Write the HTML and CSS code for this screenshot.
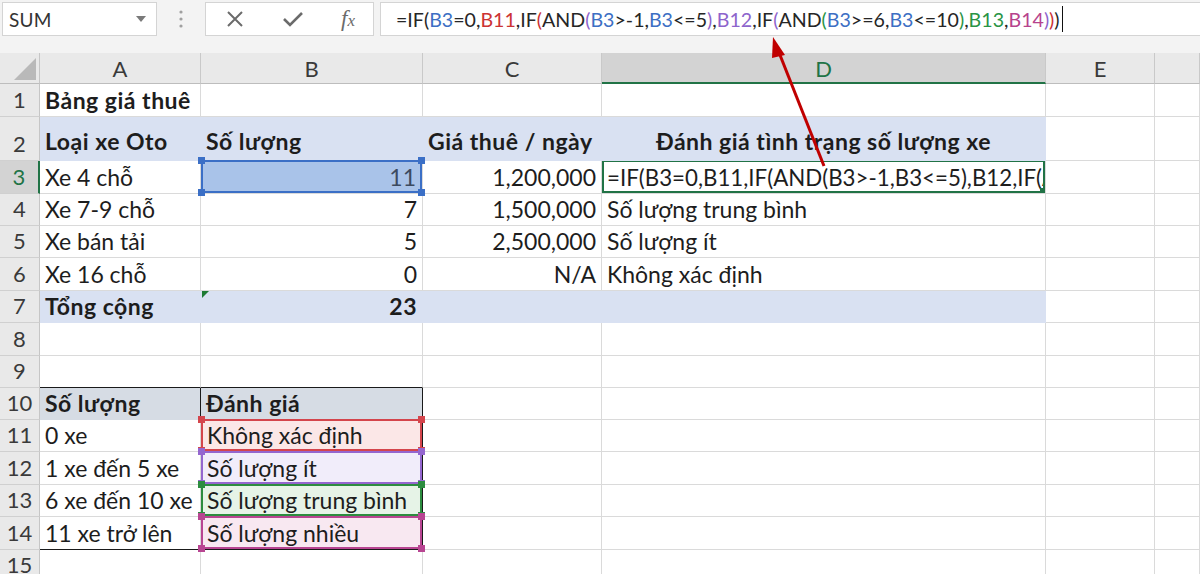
FILE: index.html
```html
<!DOCTYPE html>
<html lang="vi">
<head>
<meta charset="utf-8">
<title>Excel IF</title>
<link rel="stylesheet" href="styles.css">
</head>
<body>
<div class="page">
  <div class="toolbar">
    <div class="namebox">
      <span class="nb-text">SUM</span>
      <svg class="nb-caret" width="10" height="6" viewBox="0 0 10 6"><path d="M0 0 L10 0 L5 6 Z" fill="#7a7a7a"/></svg>
    </div>
    <div class="grip">
      <svg width="4" height="20" viewBox="0 0 4 20"><circle cx="2" cy="3" r="1.6" fill="#a0a0a0"/><circle cx="2" cy="10" r="1.6" fill="#a0a0a0"/><circle cx="2" cy="17" r="1.6" fill="#a0a0a0"/></svg>
    </div>
    <div class="fxbox">
      <svg class="btn" width="18" height="18" viewBox="0 0 18 18"><path d="M2 2 L16 16 M16 2 L2 16" stroke="#6b6b6b" stroke-width="2" fill="none"/></svg>
      <svg class="btn" width="22" height="18" viewBox="0 0 22 18"><path d="M2 9 L8 15 L20 3" stroke="#6b6b6b" stroke-width="2.6" fill="none"/></svg>
      <span class="fx">f<span class="fx-x">x</span></span>
    </div>
    <div class="formula"><span>=IF(</span><span class="k-blue">B3</span><span>=0,</span><span class="k-red">B11</span><span>,IF</span><span class="k-red">(</span><span>AND</span><span class="k-purple">(</span><span class="k-blue">B3</span><span>&gt;-1,</span><span class="k-blue">B3</span><span>&lt;=5</span><span class="k-purple">)</span><span>,</span><span class="k-purple">B12</span><span>,IF</span><span class="k-purple">(</span><span>AND</span><span class="k-green">(</span><span class="k-blue">B3</span><span>&gt;=6,</span><span class="k-blue">B3</span><span>&lt;=10</span><span class="k-green">)</span><span>,</span><span class="k-green">B13</span><span>,</span><span class="k-magenta">B14</span><span class="k-purple">)</span><span class="k-red">)</span><span>)</span><span class="cursor"></span></div>
  </div>
  <div class="strip"></div>

  <div class="sheet">
    <div class="row h31 colhdr">
      <div class="corner"><svg width="22" height="22" viewBox="0 0 22 22"><path d="M22 0 L22 22 L0 22 Z" fill="#b9b9b9"/></svg></div>
      <div class="ch">A</div>
      <div class="ch">B</div>
      <div class="ch">C</div>
      <div class="ch ch-sel">D</div>
      <div class="ch">E</div>
      <div class="ch"></div>
    </div>

    <div class="row h33">
      <div class="rh">1</div>
      <div class="c b">Bảng giá thuê</div>
      <div class="c"></div><div class="c"></div><div class="c"></div><div class="c"></div><div class="c"></div>
    </div>

    <div class="row h44">
      <div class="rh">2</div>
      <div class="c b band tall">Loại xe Oto</div>
      <div class="c b band tall">Số lượng</div>
      <div class="c b band tall">Giá thuê / ngày</div>
      <div class="c b band tall ctr">Đánh giá tình trạng số lượng xe</div>
      <div class="c"></div><div class="c"></div>
    </div>

    <div class="row h33">
      <div class="rh rh-sel">3</div>
      <div class="c">Xe 4 chỗ</div>
      <div class="c r ref ref-blue">11<i class="hd tl"></i><i class="hd tr"></i><i class="hd bl"></i><i class="hd br"></i></div>
      <div class="c r">1,200,000</div>
      <div class="c active">=IF(B3=0,B11,IF(AND(B3&gt;-1,B3&lt;=5),B12,IF(AND(B3&gt;=6,B3&lt;=10),B13,B14)))<i class="fill-handle"></i></div>
      <div class="c"></div><div class="c"></div>
    </div>

    <div class="row h32">
      <div class="rh">4</div>
      <div class="c">Xe 7-9 chỗ</div>
      <div class="c r">7</div>
      <div class="c r">1,500,000</div>
      <div class="c">Số lượng trung bình</div>
      <div class="c"></div><div class="c"></div>
    </div>

    <div class="row h32">
      <div class="rh">5</div>
      <div class="c">Xe bán tải</div>
      <div class="c r">5</div>
      <div class="c r">2,500,000</div>
      <div class="c">Số lượng ít</div>
      <div class="c"></div><div class="c"></div>
    </div>

    <div class="row h33">
      <div class="rh">6</div>
      <div class="c">Xe 16 chỗ</div>
      <div class="c r">0</div>
      <div class="c r">N/A</div>
      <div class="c">Không xác định</div>
      <div class="c"></div><div class="c"></div>
    </div>

    <div class="row h32">
      <div class="rh">7</div>
      <div class="c b band">Tổng cộng</div>
      <div class="c b band r">23<i class="err"></i></div>
      <div class="c band"></div>
      <div class="c band"></div>
      <div class="c"></div><div class="c"></div>
    </div>

    <div class="row h33">
      <div class="rh">8</div>
      <div class="c"></div><div class="c"></div><div class="c"></div><div class="c"></div><div class="c"></div><div class="c"></div>
    </div>

    <div class="row h32">
      <div class="rh">9</div>
      <div class="c bb-black"></div><div class="c bb-black"></div><div class="c"></div><div class="c"></div><div class="c"></div><div class="c"></div>
    </div>

    <div class="row h32">
      <div class="rh">10</div>
      <div class="c b hdr2 br-black">Số lượng</div>
      <div class="c b hdr2 br-black">Đánh giá</div>
      <div class="c"></div><div class="c"></div><div class="c"></div><div class="c"></div>
    </div>

    <div class="row h32">
      <div class="rh">11</div>
      <div class="c">0 xe</div>
      <div class="c ref ref-red br-black">Không xác định<i class="hd tl"></i><i class="hd tr"></i><i class="hd bl"></i><i class="hd br"></i></div>
      <div class="c"></div><div class="c"></div><div class="c"></div><div class="c"></div>
    </div>

    <div class="row h33">
      <div class="rh">12</div>
      <div class="c">1 xe đến 5 xe</div>
      <div class="c ref ref-purple br-black">Số lượng ít<i class="hd tl"></i><i class="hd tr"></i><i class="hd bl"></i><i class="hd br"></i></div>
      <div class="c"></div><div class="c"></div><div class="c"></div><div class="c"></div>
    </div>

    <div class="row h32">
      <div class="rh">13</div>
      <div class="c">6 xe đến 10 xe</div>
      <div class="c ref ref-green br-black">Số lượng trung bình<i class="hd tl"></i><i class="hd tr"></i><i class="hd bl"></i><i class="hd br"></i></div>
      <div class="c"></div><div class="c"></div><div class="c"></div><div class="c"></div>
    </div>

    <div class="row h33">
      <div class="rh">14</div>
      <div class="c bb-black">11 xe trở lên</div>
      <div class="c ref ref-magenta br-black bb-black">Số lượng nhiều<i class="hd tl"></i><i class="hd tr"></i><i class="hd bl"></i><i class="hd br"></i></div>
      <div class="c"></div><div class="c"></div><div class="c"></div><div class="c"></div>
    </div>

    <div class="row h32">
      <div class="rh">15</div>
      <div class="c"></div><div class="c"></div><div class="c"></div><div class="c"></div><div class="c"></div><div class="c"></div>
    </div>
  </div>

  <svg class="arrow" width="1200" height="574" viewBox="0 0 1200 574">
    <line x1="824" y1="166" x2="778" y2="50" stroke="#c00000" stroke-width="3"/>
    <path d="M773 37 L785 55 L772 58 Z" fill="#c00000"/>
  </svg>
</div>
</body>
</html>
```

FILE: styles.css
```css
html, body {
  margin: 0;
  padding: 0;
  background: #ffffff;
}

.page {
  position: relative;
  width: 1200px;
  height: 574px;
  overflow: hidden;
  font-family: Lato, "Noto Sans", sans-serif;
  color: #1d1d1d;
}

/* ---------- formula bar ---------- */
.toolbar {
  display: flex;
  height: 37px;
  box-sizing: border-box;
  padding: 2px 0 1px 2px;
  background: #f3f3f3;
}

.namebox {
  width: 155px;
  box-sizing: border-box;
  background: #fff;
  border: 1px solid #d4d4d4;
  display: flex;
  align-items: center;
  justify-content: space-between;
  padding: 0 10px 0 6px;
}

.nb-text {
  font-size: 19px;
  color: #333;
  letter-spacing: 0.2px;
}

.grip {
  width: 48px;
  display: flex;
  align-items: center;
  justify-content: center;
}

.fxbox {
  width: 169px;
  box-sizing: border-box;
  background: #fff;
  border: 1px solid #d4d4d4;
  display: flex;
  align-items: center;
  padding: 0 18px 0 20px;
  justify-content: space-between;
}

.fx {
  font-family: "Liberation Serif", "DejaVu Serif", serif;
  font-style: italic;
  font-size: 23px;
  color: #6b6b6b;
}

.fx-x {
  font-size: 17px;
}

.formula {
  flex: 1;
  margin-left: 6px;
  background: #fff;
  border: 1px solid #d4d4d4;
  border-right: none;
  display: flex;
  align-items: center;
  padding-left: 15px;
  font-size: 19.6px;
  color: #262626;
  white-space: nowrap;
}

.k-blue { color: #3d6fc4; }
.k-red { color: #cc3333; }
.k-purple { color: #8d64cc; }
.k-green { color: #2a9446; }
.k-magenta { color: #b7438d; }

.cursor {
  display: inline-block;
  width: 1.5px;
  height: 26px;
  background: #111;
  margin-left: 2px;
}

.strip {
  height: 16px;
  background: #f3f3f3;
}

/* ---------- sheet grid ---------- */
.row {
  display: grid;
  grid-template-columns: 40px 161px 222px 179px 444px 109px 1fr;
}

.h31 { height: 31px; }
.h32 { height: 32px; }
.h33 { height: 33px; }
.h44 { height: 44px; }

.colhdr {
  background: #e9e9e9;
}

.corner {
  border-right: 1px solid #c6c6c6;
  border-bottom: 1px solid #bdbdbd;
  box-sizing: border-box;
  display: flex;
  align-items: flex-end;
  justify-content: flex-end;
  padding: 0 3px 3px 0;
}

.ch {
  box-sizing: border-box;
  border-right: 1px solid #c9c9c9;
  border-bottom: 1px solid #bdbdbd;
  display: flex;
  align-items: center;
  justify-content: center;
  font-size: 22px;
  color: #3a3a3a;
  padding-top: 1px;
}

.ch-sel {
  background: #d3d3d3;
  color: #217346;
  border-bottom: 2px solid #217346;
}

.rh {
  box-sizing: border-box;
  background: #e9e9e9;
  border-right: 1px solid #c6c6c6;
  border-bottom: 1px solid #d0d0d0;
  display: flex;
  align-items: flex-end;
  justify-content: center;
  padding-bottom: 3px;
  font-size: 22px;
  color: #3a3a3a;
}

.rh-sel {
  background: #d3d3d3;
  color: #217346;
  border-right: 2px solid #217346;
}

.c {
  position: relative;
  box-sizing: border-box;
  border-right: 1px solid #dadada;
  border-bottom: 1px solid #dadada;
  display: flex;
  align-items: flex-end;
  padding: 0 5px 2px 5px;
  font-size: 23px;
  white-space: nowrap;
  overflow: hidden;
  color: #1d1d1d;
}

.b {
  font-weight: 700;
  letter-spacing: 0.5px;
}
.r { justify-content: flex-end; }
.ctr { justify-content: center; }
.tall { padding-bottom: 5px; }

.band {
  background: #d9e1f2;
  border-color: #d9e1f2;
}

.hdr2 {
  background: #d6dce4;
  border-bottom-color: #d6dce4;
}

.br-black { border-right-color: #1a1a1a; }
.bb-black { border-bottom-color: #1a1a1a; }

/* reference highlight boxes */
.ref {
  overflow: visible;
  padding-left: 6px;
}
.ref::before {
  content: "";
  position: absolute;
  left: 0;
  top: -1px;
  right: 0;
  bottom: 0;
  border: 2px solid var(--rc);
  pointer-events: none;
}
.ref-blue { --rc: #3b6fc6; background: #a9c3e9; color: #3c4a60; padding-right: 6px; }
.ref-red { --rc: #d4454c; background: #fbe7e7; }
.ref-purple { --rc: #9466cf; background: #f1edfa; }
.ref-green { --rc: #2c8c3f; background: #e6f3e7; }
.ref-magenta { --rc: #b84592; background: #f8e8f1; }

.hd {
  position: absolute;
  width: 7px;
  height: 7px;
  background: var(--rc);
  z-index: 2;
}
.hd.tl { left: -3px; top: -4px; }
.hd.tr { right: -3px; top: -4px; }
.hd.bl { left: -3px; bottom: -3px; }
.hd.br { right: -3px; bottom: -3px; }

.active {
  overflow: hidden;
  padding-left: 5px;
  font-size: 22.3px;
}
.active::before {
  content: "";
  position: absolute;
  left: 0;
  top: -1px;
  right: 0;
  bottom: 0;
  border: 2px solid #217346;
}
.fill-handle {
  position: absolute;
  right: 0;
  bottom: 0;
  width: 5px;
  height: 5px;
  background: #217346;
}

.err {
  position: absolute;
  left: 1px;
  top: 0;
  width: 0;
  height: 0;
  border-top: 7px solid #1e7b34;
  border-right: 7px solid transparent;
}

.arrow {
  position: absolute;
  left: 0;
  top: 0;
  pointer-events: none;
}
```
